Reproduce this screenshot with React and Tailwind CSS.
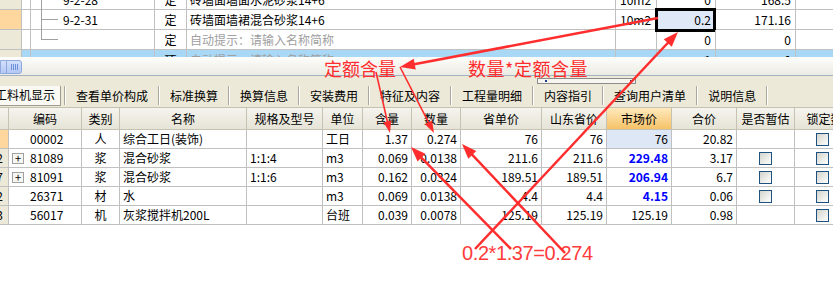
import React from 'react'

const grid = 'border-[#c0c0c0]'

const cols = [
    'w-[9px]', 'w-[73px]', 'w-[38px]', 'w-[127px]', 'w-[76px]', 'w-[40px]', 'w-[49px]',
    'w-[49px]', 'w-[81px]', 'w-[65px]', 'w-[65px]', 'w-[65px]', 'w-[58px]', 'w-[60px]',
]

const headers = ['', '编码', '类别', '名称', '规格及型号', '单位', '含量', '数量', '省单价', '山东省价', '市场价', '合价', '是否暂估', '锁定数']

const rows = [
    { n: '', code: '00002', type: '人', name: '综合工日(装饰)', spec: '', unit: '工日', hl: '1.37', sl: '0.274', p1: '76', p2: '76', mp: '76', total: '20.82', cur: true },
    { n: '2', plus: true, code: '81089', type: '浆', name: '混合砂浆', spec: '1:1:4', unit: 'm3', hl: '0.069', sl: '0.0138', p1: '211.6', p2: '211.6', mp: '229.48', blue: true, total: '3.17', est: true },
    { n: '7', plus: true, code: '81091', type: '浆', name: '混合砂浆', spec: '1:1:6', unit: 'm3', hl: '0.162', sl: '0.0324', p1: '189.51', p2: '189.51', mp: '206.94', blue: true, total: '6.7', est: true },
    { n: '2', code: '26371', type: '材', name: '水', spec: '', unit: 'm3', hl: '0.069', sl: '0.0138', p1: '4.4', p2: '4.4', mp: '4.15', blue: true, total: '0.06', est: true },
    { n: '3', code: '56017', type: '机', name: '灰浆搅拌机200L', spec: '', unit: '台班', hl: '0.039', sl: '0.0078', p1: '125.19', p2: '125.19', mp: '125.19', total: '0.98' },
]

const tabs = ['查看单价构成', '标准换算', '换算信息', '安装费用', '特征及内容', '工程量明细', '内容指引', '查询用户清单', '说明信息']

function Check() {
    return <div className="w-[13px] h-[13px] border border-[#1c5180] bg-linear-to-br from-[#d4d4cc] to-white" />
}

function Arrow({ x1, y1, x2, y2, w = 2.5, head = 15, hw = 5.5 }) {
    const dx = x2 - x1
    const dy = y2 - y1
    const len = Math.hypot(dx, dy)
    const ux = dx / len
    const uy = dy / len
    const bx = x2 - ux * head
    const by = y2 - uy * head
    const px = -uy * hw
    const py = ux * hw
    return (
        <g>
            <line x1={x1} y1={y1} x2={bx + ux * 2} y2={by + uy * 2} stroke="#ff2d2d" strokeWidth={w} />
            <polygon points={`${x2},${y2} ${bx + px},${by + py} ${bx - px},${by - py}`} fill="#ff2d2d" />
        </g>
    )
}

function TopRow({ leftBg = 'bg-[#ece9d8]', blue, tree, code, type, name, gray, unit, qty, val, sel, num }) {
    return (
        <div className={`flex h-[20px] border-b ${grid} ${blue ? 'bg-[#a8d8f6]' : 'bg-white'}`}>
            <div className={`w-[22px] border-r ${grid} ${leftBg} text-[12px] leading-[34px] overflow-hidden`}>{num}</div>
            <div className={`w-[9px] border-r ${grid}`} />
            <div className={`w-[124px] border-r ${grid} relative flex items-center pl-[32px]`}>
                {tree === 'mid' && (
                    <>
                        <div className="absolute left-[10px] top-0 bottom-[-1px] border-l border-[#a0a0a0]" />
                        <div className="absolute left-[10px] top-[9px] w-[17px] border-t border-[#a0a0a0]" />
                    </>
                )}
                {tree === 'end' && (
                    <div className="absolute left-[10px] top-0 h-[10px] w-[17px] border-l border-b border-[#a0a0a0]" />
                )}
                {code}
            </div>
            <div className={`w-[32px] border-r ${grid} flex items-center justify-center`}>{type}</div>
            <div className={`w-[429px] border-r ${grid} flex items-center pl-[3px] ${gray ? 'text-[#a0a0a0]' : ''}`}>{name}</div>
            <div className={`w-[41px] border-r ${grid} flex items-center pl-[4px]`}>{unit}</div>
            <div className={`w-[59px] border-r ${grid} relative flex items-center justify-end pr-[4px] ${sel ? 'bg-[#dfe8f6]' : ''}`}>
                {sel && <div className="absolute left-[-2px] right-[-1px] top-[-2px] bottom-[-3px] border-[3px] border-black" />}
                <span className="relative">{qty}</span>
            </div>
            <div className={`w-[80px] border-r ${grid} flex items-center justify-end pr-[4px]`}>{val}</div>
            <div className="flex-1" />
        </div>
    )
}

export default function App() {
    return (
        <div className="relative w-[833px] h-[282px] overflow-hidden bg-white text-[12px] text-black font-['Noto_Sans_CJK_SC',sans-serif] leading-none">
            {/* upper grid */}
            <div className="h-[57px] overflow-hidden">
                <div className="-mt-[10px]">
                    <TopRow tree="mid" code="9-2-28" type="定" name="砖墙面墙面水泥砂浆14+6" unit="10m2" qty="0" val="168.5" />
                    <TopRow leftBg="bg-[#fdd79e]" tree="mid" code="9-2-31" type="定" name="砖墙面墙裙混合砂浆14+6" unit="10m2" qty="0.2" val="171.16" sel />
                    <TopRow tree="end" type="定" name="自动提示：请输入名称简称" gray qty="0" val="0" />
                    <TopRow blue num="13" type="项" name="自动提示：请输入名称简称" gray qty="1" val="0" />
                </div>
            </div>

            {/* scroll strip */}
            <div className="h-[19px] border-b border-[#a3b3c3] bg-linear-to-b from-[#fdfdfb] to-[#ecebe3] flex items-start pt-[3px]">
                <div className="flex h-[14px] w-[22px] rounded-r-[3px] border border-[#8fa9dd] bg-linear-to-b from-[#d4e0fc] to-[#b3c8f5]">
                    <div className="w-[6px] border-r border-[#8fa9dd]" />
                    <div className="flex-1 flex items-center justify-center gap-[1px]">
                        <div className="w-[1px] h-[6px] bg-[#6f8fd6]" />
                        <div className="w-[1px] h-[6px] bg-[#6f8fd6]" />
                        <div className="w-[1px] h-[6px] bg-[#6f8fd6]" />
                        <div className="w-[1px] h-[6px] bg-[#6f8fd6]" />
                    </div>
                </div>
            </div>

            {/* tabs */}
            <div className="relative h-[31px] bg-[#ece9d8] flex items-center pt-[8px] text-[12px]">
                <div className="absolute left-[537px] top-[2px] w-[99px] h-[6px] border border-[#8c8c8c] bg-[#f6f5f0]">
                    <div className="absolute left-[7px] top-[1px] w-[2px] h-[2px] bg-[#1c3c8c]" />
                    <div className="absolute left-[92px] top-[1px] w-[2px] h-[2px] bg-[#1c3c8c]" />
                </div>
                <div className="h-[20px] w-[61px] pl-[0px] flex items-center justify-end pr-[5px] bg-[#faf9f4] border-r border-b border-[#9d9b8e] overflow-hidden whitespace-nowrap">
                    <span>工料机显示</span>
                </div>
                <div className="ml-[3px]" />
                {tabs.map(t => (
                    <div key={t} className="flex items-center">
                        <div className="h-[19px] w-[2px] border-l border-[#aca899] border-r border-r-white" />
                        <div className="px-[10px] whitespace-nowrap">{t}</div>
                    </div>
                ))}
                <div className="h-[19px] w-[2px] border-l border-[#aca899] border-r border-r-white" />
            </div>

            {/* material table */}
            <div className="w-[900px]">
                <div className={`flex h-[23px] border-t border-b border-[#c5c2b2] bg-linear-to-b from-[#f5f4ee] to-[#e6e4d7]`}>
                    {headers.map((h, i) => (
                        <div
                            key={i}
                            className={`${cols[i]} shrink-0 border-r border-[#c5c2b2] flex items-center justify-center whitespace-nowrap overflow-hidden ${i === 10 ? 'bg-linear-to-b from-[#fee9bb] to-[#f6c266]' : ''}`}
                        >
                            {h}
                        </div>
                    ))}
                </div>
                {rows.map((r, idx) => (
                    <div key={idx} className={`flex h-[19px] border-b ${grid}`}>
                        <div className={`${cols[0]} shrink-0 border-r ${grid} flex items-center justify-end pr-[5px] overflow-hidden ${r.cur ? 'bg-[#fdd79e]' : 'bg-[#ece9d8]'}`}>{r.n}</div>
                        <div className={`${cols[1]} shrink-0 border-r ${grid} flex items-center pl-[3px]`}>
                            <div className="w-[18px] shrink-0">
                                {r.plus && (
                                    <div className="w-[12px] h-[11px] border border-[#a0a0a0] bg-[#f6f6f2] flex items-center justify-center text-[11px]">+</div>
                                )}
                            </div>
                            {r.code}
                        </div>
                        <div className={`${cols[2]} shrink-0 border-r ${grid} flex items-center justify-center`}>{r.type}</div>
                        <div className={`${cols[3]} shrink-0 border-r ${grid} flex items-center pl-[3px] whitespace-nowrap`}>{r.name}</div>
                        <div className={`${cols[4]} shrink-0 border-r ${grid} flex items-center pl-[3px]`}>{r.spec}</div>
                        <div className={`${cols[5]} shrink-0 border-r ${grid} flex items-center pl-[3px]`}>{r.unit}</div>
                        <div className={`${cols[6]} shrink-0 border-r ${grid} flex items-center justify-end pr-[3px]`}>{r.hl}</div>
                        <div className={`${cols[7]} shrink-0 border-r ${grid} flex items-center justify-end pr-[3px]`}>{r.sl}</div>
                        <div className={`${cols[8]} shrink-0 border-r ${grid} flex items-center justify-end pr-[3px]`}>{r.p1}</div>
                        <div className={`${cols[9]} shrink-0 border-r ${grid} flex items-center justify-end pr-[3px]`}>{r.p2}</div>
                        <div className={`${cols[10]} shrink-0 border-r ${grid} flex items-center justify-end pr-[3px] ${r.cur ? 'bg-[#dde7f5]' : ''} ${r.blue ? 'text-[#0000ff] font-bold' : ''}`}>{r.mp}</div>
                        <div className={`${cols[11]} shrink-0 border-r ${grid} flex items-center justify-end pr-[3px]`}>{r.total}</div>
                        <div className={`${cols[12]} shrink-0 border-r ${grid} flex items-center justify-center`}>{r.est && <Check />}</div>
                        <div className={`${cols[13]} shrink-0 flex items-center pl-[21px]`}><Check /></div>
                    </div>
                ))}
            </div>

            {/* red notes */}
            <div className="absolute left-[324px] top-[59px] text-[18px] text-[#ff2d2d] whitespace-nowrap">定额含量</div>
            <div className="absolute left-[468px] top-[59px] text-[18px] text-[#ff2d2d] whitespace-nowrap tracking-[0.5px]">数量*定额含量</div>
            <div className="absolute left-[462px] top-[243px] text-[20px] text-[#ff3c3c] whitespace-nowrap tracking-[-0.4px] font-['Liberation_Sans',sans-serif]">0.2*1.37=0.274</div>

            <svg className="absolute inset-0 pointer-events-none" width="833" height="282">
                <Arrow x1={658} y1={18} x2={400} y2={67} w={2.5} />
                <Arrow x1={475} y1={249} x2={678} y2={32} w={2.5} />
                <Arrow x1={511} y1={249} x2={411} y2={147} w={2.5} />
                <Arrow x1={565} y1={253} x2={462} y2={144} w={2.5} />
                <Arrow x1={376} y1={72} x2={390} y2={133} w={1.6} head={12} hw={4} />
                <Arrow x1={400} y1={67} x2={434} y2={133} w={1.6} head={12} hw={4} />
            </svg>
        </div>
    )
}
